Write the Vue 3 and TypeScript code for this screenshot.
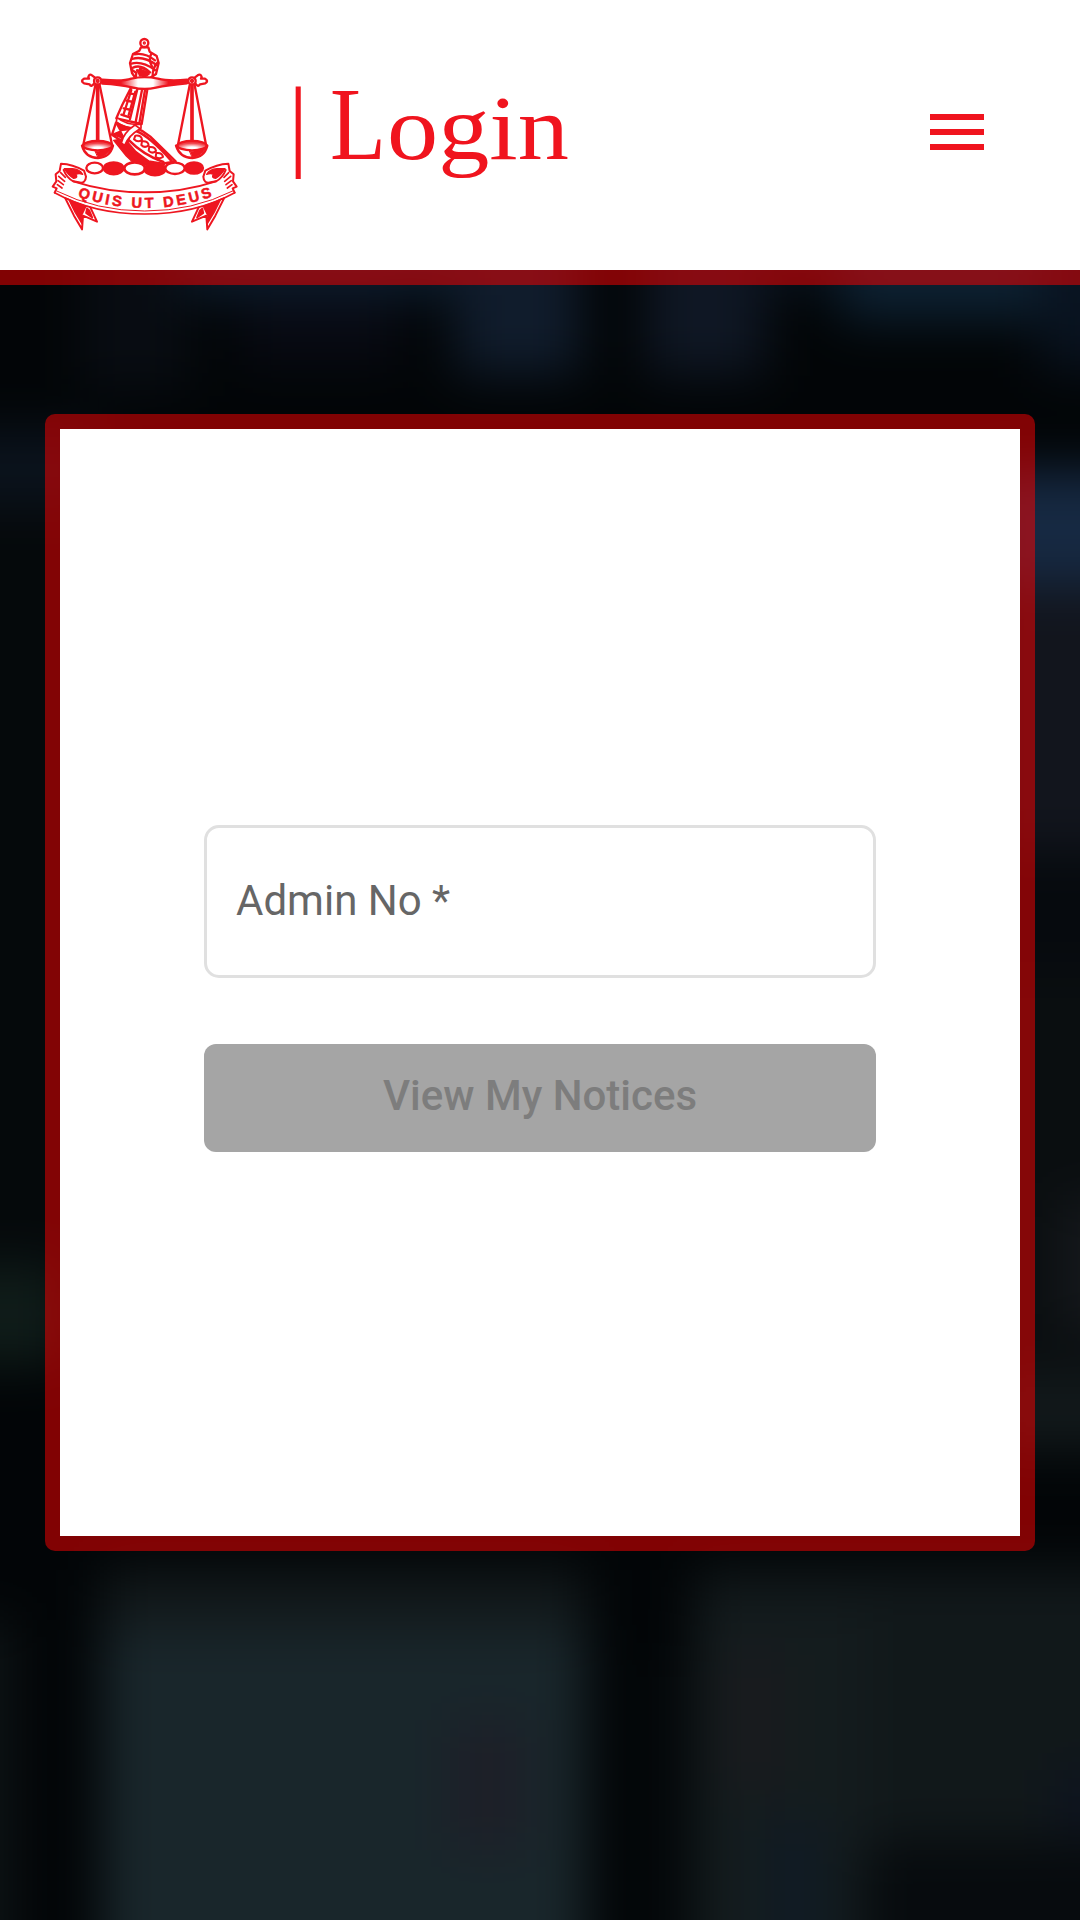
<script setup lang="ts">
import { ref } from 'vue'

interface Glow {
  x: number
  y: number
  w: number
  h: number
  fill: string
}

const adminNo = ref('')

const glows: Glow[] = [
  { x: 80, y: 160, w: 110, h: 230, fill: '#080c12' },
  { x: 180, y: 160, w: 290, h: 135, fill: '#0d1d2e' },
  { x: 240, y: 295, w: 160, h: 70, fill: '#080a13' },
  { x: 455, y: 160, w: 125, h: 215, fill: '#101c2c' },
  { x: 645, y: 160, w: 120, h: 215, fill: '#0f1724' },
  { x: 765, y: 160, w: 75, h: 130, fill: '#08111b' },
  { x: 840, y: 160, w: 200, h: 160, fill: '#0d2132' },
  { x: 1040, y: 160, w: 140, h: 210, fill: '#091320' },
  { x: -100, y: 430, w: 200, h: 75, fill: '#0b131d' },
  { x: -100, y: 505, w: 200, h: 770, fill: '#05090b' },
  { x: -100, y: 1265, w: 165, h: 100, fill: '#0f1c19' },
  { x: 980, y: 470, w: 200, h: 115, fill: '#162942' },
  { x: 980, y: 585, w: 200, h: 265, fill: '#12151d' },
  { x: 980, y: 850, w: 200, h: 120, fill: '#060a0e' },
  { x: 980, y: 970, w: 200, h: 460, fill: '#0a0e10' },
  { x: 1060, y: 1200, w: 120, h: 130, fill: '#15181c' },
  { x: 980, y: 1375, w: 200, h: 75, fill: '#12191b' },
  { x: -100, y: 1620, w: 115, h: 440, fill: '#0d1315' },
  { x: 102, y: 1570, w: 484, h: 65, fill: '#12191b' },
  { x: 102, y: 1630, w: 484, h: 460, fill: '#19262b' },
  { x: 645, y: 1660, w: 60, h: 400, fill: '#04080a' },
  { x: 695, y: 1570, w: 485, h: 290, fill: '#11181a' },
  { x: 695, y: 1610, w: 170, h: 460, fill: '#141c1e' },
  { x: 870, y: 1840, w: 310, h: 240, fill: '#070b0e' },
  { x: 450, y: 1720, w: 75, h: 130, fill: '#1d1f28' },
  { x: 720, y: 1650, w: 65, h: 140, fill: '#191b1e' },
  { x: 765, y: 1820, w: 60, h: 240, fill: '#101b24' },
  { x: 1055, y: 1770, w: 100, h: 60, fill: '#0d1320' },
]
</script>

<template>
  <div class="page">
    <svg class="backdrop" viewBox="0 0 1080 1920" preserveAspectRatio="none" aria-hidden="true">
      <defs>
        <filter id="soft" filterUnits="userSpaceOnUse" x="-100" y="-100" width="1280" height="2120" color-interpolation-filters="sRGB">
          <feGaussianBlur stdDeviation="25" />
        </filter>
      </defs>
      <g filter="url(#soft)">
        <rect x="-200" y="-200" width="1480" height="2320" fill="#020507" />
        <rect v-for="(g, i) in glows" :key="i" :x="g.x" :y="g.y" :width="g.w" :height="g.h" :fill="g.fill" />
      </g>
    </svg>

    <header class="bar">
      <svg class="crest" viewBox="0 0 630 630" role="img" aria-label="Crest">
        <defs>
          <linearGradient id="beam">
            <stop offset="0" stop-color="#ee1620" /><stop offset=".22" stop-color="#ee1620" />
            <stop offset=".42" stop-color="#fff" /><stop offset=".6" stop-color="#fff" />
            <stop offset=".78" stop-color="#ee1620" /><stop offset="1" stop-color="#ee1620" />
          </linearGradient>
          <radialGradient id="pan" cy=".8" r=".55">
            <stop offset="0" stop-color="#fff" /><stop offset=".3" stop-color="#fff" /><stop offset="1" stop-color="#f0444c" />
          </radialGradient>
          <path id="motto" d="M102 496 Q314 572 528 496" />
        </defs>
        <g fill="none" stroke="#ee1620" stroke-width="7" stroke-linejoin="round" stroke-linecap="round">
          <!-- gauntlet -->
          <path d="M303 52 L325 52 L329 65 L350 78 L356 99 L348 132 L329 145 L287 145 L276 129 L270 99 L279 72 L298 62 Z" fill="#fff" />
          <circle cx="313" cy="39" r="12" fill="#fff" />
          <circle cx="313" cy="39" r="3" stroke-width="4" />
          <path d="M284 73 Q315 67 345 91 M276 87 Q309 76 350 105 M274 101 Q306 92 345 120 M279 113 Q303 102 330 127 M334 71 Q324 90 336 109 M353 97 Q337 114 338 139 M275 119 L289 129 L287 144 M300 117 Q320 112 326 132 L311 139 L291 121" />
          <path d="M294 121 L317 124 L321 135 L300 137 Z" fill="#ee1620" />
          <!-- sleeve -->
          <path d="M274 171 L322 178 L305 282 L229 265 L247 224 Z" fill="#fff" />
          <path d="M292 178 L270 267 M306 180 L287 276 M315 180 L298 280 M267 190 L286 193 M259 212 L280 216 M251 235 L274 240 M244 254 L269 262" />
          <path d="M274 180 L250 255 M286 185 L266 255" stroke-width="7" />
          <path d="M231 263 Q262 287 303 283 L303 295 Q260 300 229 276 Z" fill="#fff" stroke-width="5" />
          <path d="M228 278 L216 314 L255 340 L291 296 Q257 295 228 278 Z" fill="#fff" />
          <path d="M230 283 L282 298 L247 301 L217 313 L251 326 L221 331 L259 378 L282 400 L310 402 L286 381 L263 351 L254 326 Z" fill="#ee1620" stroke-width="4" />
          <path d="M287 293 Q309 302 331 320 L407 394 L362 402 L305 401 L261 344 Q265 318 287 293 Z" fill="#fff" />
          <path d="M248 340 L300 403 L372 402 L326 394 L287 366 L263 338 Z" fill="#ee1620" />
          <path d="M290 304 Q330 320 395 393 M268 332 Q310 375 370 396" stroke-width="8" />
          <path d="M285 285 Q251 307 244 339 L254 346 Q264 318 300 296 Z" fill="#fff" stroke-width="5" />
          <path d="M286 317 q18 -2 20 12 q-12 10 -24 -1 z M306 334 q18 -2 20 12 q-12 10 -22 -1 z M328 351 q18 -2 20 12 q-12 10 -22 -1 z M349 369 q18 -2 20 12 q-12 8 -22 -1 z" fill="#fff" stroke-width="6" />
          <!-- balance beam -->
          <path d="M187 149 Q249 155 274 146 Q313 137 354 146 Q385 154 441 149 L441 160 Q382 165 348 173 Q313 181 276 172 Q241 164 187 161 Z" fill="url(#beam)" />
          <path d="M164 142 L156 136 Q148 130 145 141 L147 146 L132 146 Q120 153 132 160 L149 163 Q153 173 163 160 M465 142 L473 136 Q482 130 485 141 L483 146 L495 146 Q507 153 496 160 L480 163 Q475 173 466 160" fill="#fff" />
          <circle cx="173" cy="153" r="11" fill="#fff" /><circle cx="173" cy="153" r="3" />
          <circle cx="456" cy="153" r="11" fill="#fff" /><circle cx="456" cy="153" r="3" />
          <!-- chains -->
          <path d="M166 166 L130 344 M179 166 L216 344 M449 166 L414 344 M464 166 L498 344" />
          <path d="M173 165 V331 M456 165 V331" stroke-width="11" />
          <!-- pans -->
          <path d="M126 347 H219 Q210 382 174 384 Q136 383 126 347 Z M408 347 H502 Q493 382 457 384 Q419 383 408 347 Z" fill="#fff" />
          <path d="M166 363 Q190 366 213 354 Q201 380 174 381 Z M449 363 Q473 366 496 354 Q484 380 457 381 Z" fill="#ee1620" stroke-width="3" />
          <ellipse cx="173" cy="347" rx="44" ry="14" fill="url(#pan)" />
          <ellipse cx="456" cy="347" rx="44" ry="14" fill="url(#pan)" />
          <!-- wreath -->
          <ellipse cx="164" cy="414" rx="25" ry="16" fill="#fff" />
          <ellipse cx="221" cy="415" rx="29" ry="18" fill="#ee1620" />
          <ellipse cx="284" cy="415" rx="31" ry="18" fill="#fff" stroke-width="8" />
          <ellipse cx="345" cy="418" rx="31" ry="18" fill="#ee1620" />
          <ellipse cx="405" cy="415" rx="29" ry="17" fill="#fff" />
          <ellipse cx="462" cy="414" rx="27" ry="17" fill="#ee1620" />
          <!-- ribbon tails -->
          <path d="M76 505 L102 557 L126 598 L129 557 L171 575 L151 532 L138 517 Z M552 505 L526 557 L502 598 L499 557 L456 575 L476 532 L490 517 Z" fill="#fff" stroke-width="6" />
          <path d="M86 507 L138 528 L124 557 L126 580 L106 547 Z M542 507 L490 528 L504 557 L502 580 L522 547 Z M141 535 L148 541 L157 563 L138 549 Z M487 535 L480 541 L471 563 L490 549 Z" fill="#ee1620" stroke-width="5" />
          <!-- motto band -->
          <path d="M76 432 Q92 455 174 473 Q240 487 314 487 Q388 487 454 473 Q536 455 552 432 L580 482 Q540 515 454 535 Q388 550 314 550 Q240 550 174 535 Q88 515 48 482 Z" fill="#fff" stroke="none" />
          <path d="M100 454 Q200 487 314 487 Q428 487 528 454" stroke-width="6" />
          <path d="M44 488 Q160 552 314 552 Q468 552 584 488" stroke-width="5" />
          <path d="M50 483 Q170 543 314 543 Q458 543 578 483" stroke-width="3" />
          <!-- ribbon folds -->
          <path d="M44 488 L50 475 L38 470 L49 454 L47 433 L59 423 L63 401 Q98 402 132 422 L138 440 Q137 462 116 457 L100 454 Q80 444 71 420 M584 488 L578 475 L590 470 L579 454 L581 433 L569 423 L565 401 Q530 402 496 422 L490 440 Q491 462 512 457 L528 454 Q548 444 557 420" stroke-width="6" />
          <path d="M73 416 L97 416 Q119 417 128 433 Q116 428 108 433 Q115 444 101 445 Q85 436 73 416 Z M555 416 L531 416 Q509 417 500 433 Q512 428 520 433 Q513 444 527 445 Q543 436 555 416 Z" fill="#ee1620" stroke-width="4" />
          <path d="M62 428 L76 442 M56 439 L74 454 M54 452 L70 464 M52 464 L66 474 M566 428 L552 442 M572 439 L554 454 M574 452 L558 464 M576 464 L562 474" stroke-width="5" />
        </g>
        <text class="motto"><textPath href="#motto" startOffset="50%" text-anchor="middle" textLength="412">QUIS UT DEUS</textPath></text>
      </svg>

      <svg class="title" viewBox="0 0 300 130" role="heading" aria-level="1">
        <text><tspan class="rule" x="8" y="87">|</tspan> <tspan class="cap" x="50" y="89" textLength="56" lengthAdjust="spacingAndGlyphs">L</tspan><tspan x="107" y="89" textLength="182" lengthAdjust="spacingAndGlyphs">ogin</tspan></text>
      </svg>

      <button class="menu" type="button" aria-label="Menu">
        <svg viewBox="0 0 54 36"><path d="M0 0h54v6H0zM0 15h54v6H0zM0 30h54v6H0z" fill="#f0141e" /></svg>
      </button>
    </header>

    <main class="card">
      <form class="form" @submit.prevent>
        <label class="field">
          <span v-if="!adminNo" class="label">Admin No *</span>
          <input v-model="adminNo" class="input" type="text" aria-label="Admin No" />
        </label>
        <button class="submit" type="submit" :disabled="!adminNo">View My Notices</button>
      </form>
    </main>
  </div>
</template>

<style>
body { background: #020507; }
</style>

<style scoped>
.page {
  position: relative;
  box-sizing: border-box;
  width: 100%;
  height: 1920px;
  overflow: hidden;
  font-family: Roboto, "Liberation Sans", sans-serif;
}
.backdrop {
  position: absolute;
  inset: 0;
  width: 100%;
  height: 100%;
}
.bar {
  position: relative;
  box-sizing: border-box;
  display: flex;
  align-items: flex-start;
  height: 285px;
  padding: 30px 96px 0 40px;
  background: #fff padding-box;
  border-bottom: 15px solid rgba(255, 0, 0, 0.5);
}
.crest {
  flex: none;
  width: 210px;
  height: 210px;
}
.motto {
  font: bold 44px "Liberation Sans", Arial, sans-serif;
  fill: #ee1620;
  stroke: #ee1620;
  stroke-width: 1.5px;
}
.title {
  flex: none;
  width: 300px;
  height: 130px;
  margin: 40px 0 0 30px;
  overflow: visible;
  font: 92px "Liberation Serif", "Times New Roman", serif;
  fill: #f0141e;
}
.cap { font-size: 103px; }
.rule { font-size: 102px; }
.menu {
  display: flex;
  margin: 84px 0 0 auto;
  padding: 0;
  border: 0;
  background: none;
}
.menu svg {
  width: 54px;
  height: 36px;
}
.card {
  position: relative;
  box-sizing: border-box;
  display: flex;
  align-items: center;
  justify-content: center;
  height: 1137px;
  margin: 129px 45px 0;
  padding-bottom: 3px;
  background: #fff padding-box;
  border: 15px solid rgba(255, 0, 0, 0.5);
  border-radius: 10px;
}
.form {
  display: flex;
  flex-direction: column;
  gap: 66px;
  width: 672px;
  padding-top: 15px;
}
.field {
  box-sizing: border-box;
  display: grid;
  align-items: center;
  height: 153px;
  padding: 0 29px;
  border: 3px solid #e0e0e0;
  border-radius: 15px;
}
.label,
.input {
  grid-area: 1 / 1;
  font: 400 42px Roboto, sans-serif;
}
.label {
  padding-bottom: 2px;
  color: #666;
  line-height: 48px;
}
.input {
  width: 100%;
  padding: 0;
  border: 0;
  outline: 0;
  background: transparent;
}
.submit {
  height: 108px;
  padding: 0 0 5px;
  border: 0;
  border-radius: 12px;
  background: #a5a5a5;
  color: #7d7d7d;
  font: 500 42px Roboto, sans-serif;
}
</style>
